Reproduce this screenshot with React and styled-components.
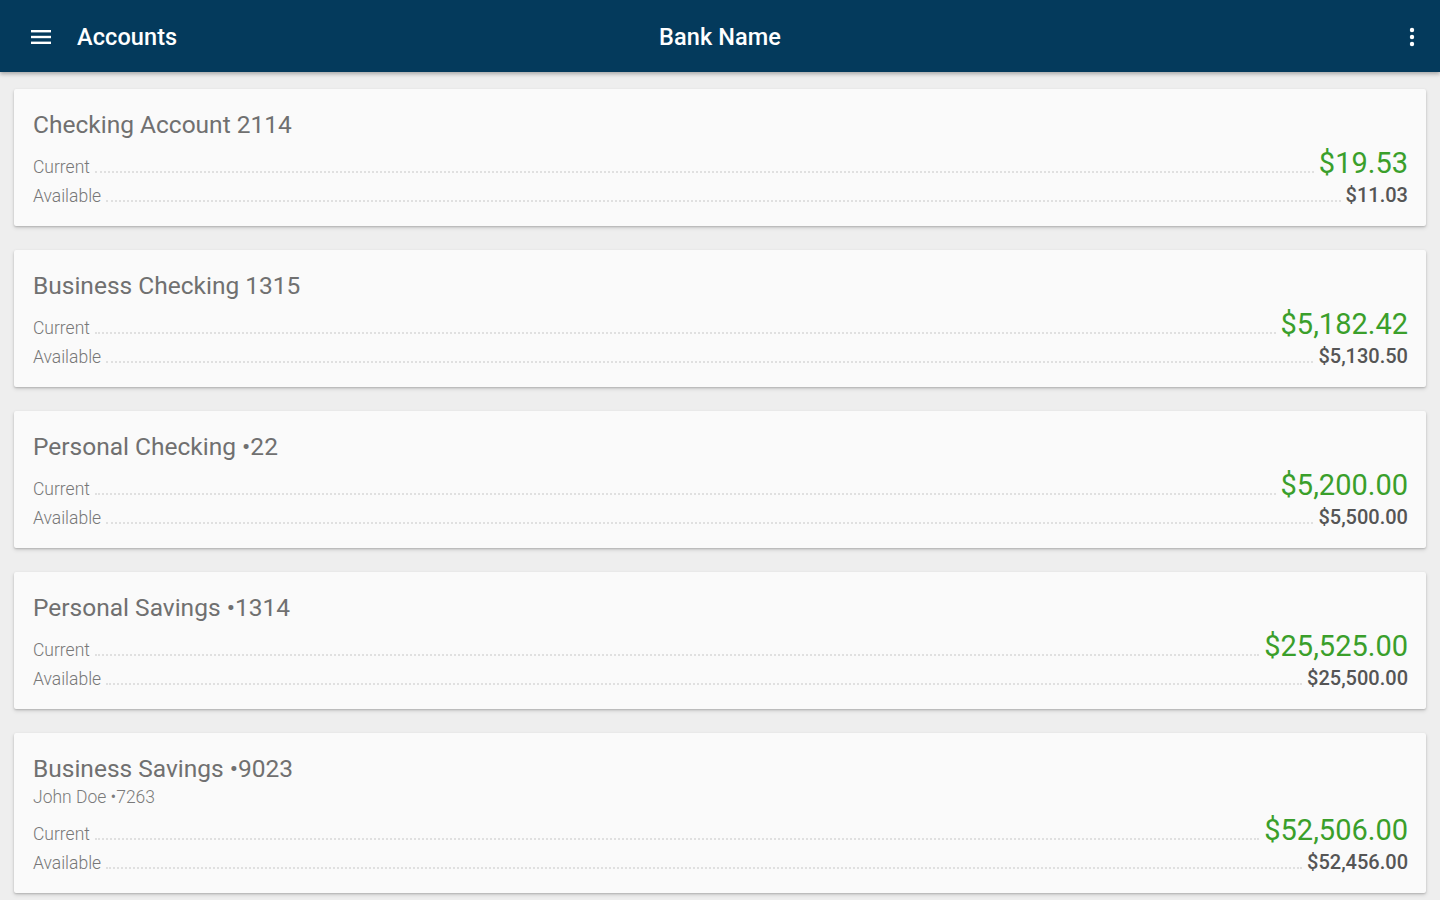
import React from "react";
import styled, { createGlobalStyle } from "styled-components";

const Global = createGlobalStyle`
  html, body { margin: 0; padding: 0; background: #eeeeee; }
  body { font-family: Roboto, "Noto Sans", Arial, sans-serif; -webkit-font-smoothing: antialiased; }
  * { box-sizing: border-box; }
`;

const Page = styled.div`
  width: 1440px;
  height: 900px;
  overflow: hidden;
  background: #eeeeee;
`;

const TopBar = styled.header`
  position: relative;
  z-index: 2;
  height: 72px;
  background: #043a5c;
  display: grid;
  grid-template-columns: 1fr auto 1fr;
  align-items: center;
  padding: 2px 15px 0 15px;
  box-shadow: 0 2px 4px rgba(0, 0, 0, 0.3);
  color: #ffffff;
`;

const Left = styled.div`
  display: flex;
  align-items: center;
  gap: 23px;
  padding-left: 13px;
`;

const Right = styled.div`
  display: flex;
  justify-content: flex-end;
  align-items: center;
`;

const BarTitle = styled.span`
  font-size: 23.5px;
  font-weight: 500;
  letter-spacing: 0.1px;
`;

const IconBtn = styled.span`
  display: flex;
  align-items: center;
  justify-content: center;
  width: 26px;
  height: 26px;
`;

const List = styled.main`
  display: flex;
  flex-direction: column;
  gap: 24px;
  padding: 17px 14px 0 14px;
`;

const Card = styled.section`
  background: #fafafa;
  border-radius: 2px;
  box-shadow: 0 1px 2px rgba(0, 0, 0, 0.18), 0 2px 4px rgba(0, 0, 0, 0.12);
  padding: 20px 18px 19px 19px;
`;

const Title = styled.div`
  font-size: 24.5px;
  line-height: 32px;
  color: #707070;
  font-weight: 400;
`;

const Subtitle = styled.div`
  font-size: 17.5px;
  line-height: 22px;
  color: #7a7a7a;
  font-weight: 300;
  margin-top: 1px;
  margin-bottom: 1px;
`;

const Row = styled.div`
  display: flex;
  align-items: baseline;
  margin-top: ${(p) => p.$mt}px;
  height: ${(p) => p.$h}px;
  line-height: ${(p) => p.$h}px;
`;

const Label = styled.span`
  font-size: 17.5px;
  font-weight: 300;
  color: #777777;
`;

const Leader = styled.div`
  flex: 1;
  height: 2px;
  margin: 0 5px 0 5px;
  border-bottom: 2px dotted #e0e0e0;
`;

const Amount = styled.span`
  font-size: ${(p) => (p.$big ? 29 : 20)}px;
  color: ${(p) => (p.$big ? "#3a9f2b" : "#555555")};
  font-weight: ${(p) => (p.$big ? 400 : 500)};
`;

const accounts = [
  { name: "Checking Account 2114", current: "$19.53", available: "$11.03" },
  { name: "Business Checking 1315", current: "$5,182.42", available: "$5,130.50" },
  { name: "Personal Checking \u202222", current: "$5,200.00", available: "$5,500.00" },
  { name: "Personal Savings \u20221314", current: "$25,525.00", available: "$25,500.00" },
  {
    name: "Business Savings \u20229023",
    owner: "John Doe \u20227263",
    current: "$52,506.00",
    available: "$52,456.00",
  },
];

function MenuIcon() {
  return (
    <svg width="22" height="16" viewBox="0 0 22 16">
      <rect x="1" y="1" width="20" height="2.4" fill="#fff" />
      <rect x="1" y="6.8" width="20" height="2.4" fill="#fff" />
      <rect x="1" y="12.6" width="20" height="2.4" fill="#fff" />
    </svg>
  );
}

function MoreIcon() {
  return (
    <svg width="6" height="20" viewBox="0 0 6 20">
      <circle cx="3" cy="3" r="2.2" fill="#fff" />
      <circle cx="3" cy="10" r="2.2" fill="#fff" />
      <circle cx="3" cy="17" r="2.2" fill="#fff" />
    </svg>
  );
}

export default function App() {
  return (
    <Page>
      <Global />
      <TopBar>
        <Left>
          <IconBtn>
            <MenuIcon />
          </IconBtn>
          <BarTitle>Accounts</BarTitle>
        </Left>
        <BarTitle>Bank Name</BarTitle>
        <Right>
          <IconBtn>
            <MoreIcon />
          </IconBtn>
        </Right>
      </TopBar>
      <List>
        {accounts.map((a) => (
          <Card key={a.name}>
            <Title>{a.name}</Title>
            {a.owner && <Subtitle>{a.owner}</Subtitle>}
            <Row $mt={5} $h={34}>
              <Label>Current</Label>
              <Leader />
              <Amount $big>{a.current}</Amount>
            </Row>
            <Row $mt={3} $h={24}>
              <Label>Available</Label>
              <Leader />
              <Amount>{a.available}</Amount>
            </Row>
          </Card>
        ))}
      </List>
    </Page>
  );
}
